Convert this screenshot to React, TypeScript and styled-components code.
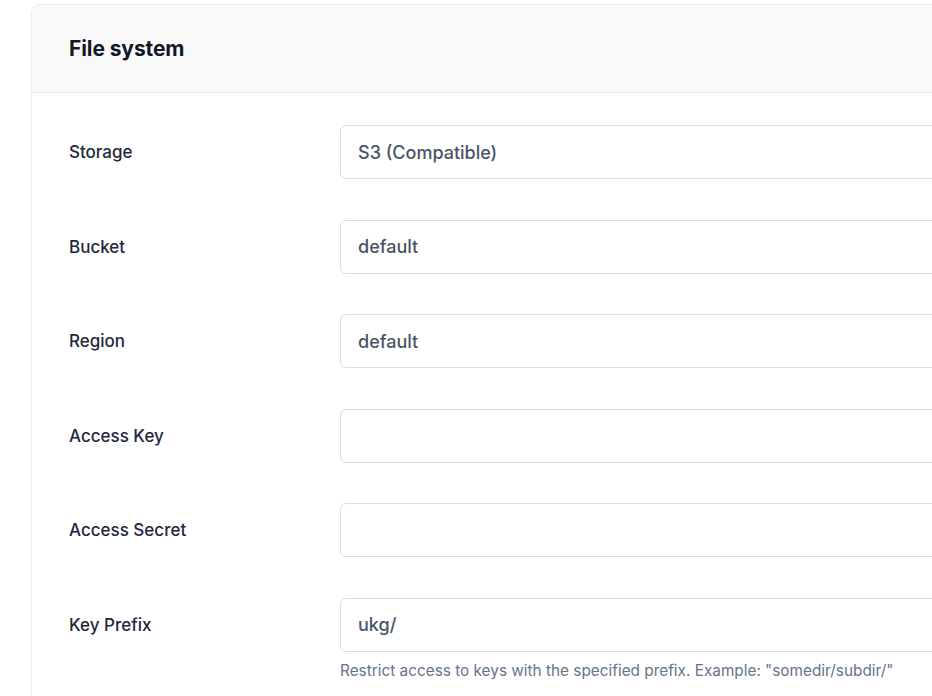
import styled, { createGlobalStyle } from 'styled-components'

const GlobalStyle = createGlobalStyle`
  html, body {
    margin: 0;
    padding: 0;
    background: #ffffff;
    overflow: hidden;
  }
  body {
    font-family: Inter, "Noto Sans", "Liberation Sans", sans-serif;
    -webkit-font-smoothing: antialiased;
  }
`

const Card = styled.section`
  width: 1200px;
  margin: 4px 0 0 31px;
  border: 1px solid #ebebed;
  border-radius: 9px;
  background: #ffffff;
  overflow: hidden;
`

const CardHeader = styled.header`
  height: 87px;
  display: flex;
  align-items: center;
  padding: 0 37px;
  background: #f9f9fa;
  border-bottom: 1px solid #ececee;
`

const Title = styled.h2`
  margin: 0;
  font-size: 21px;
  font-weight: 700;
  color: #111827;
  letter-spacing: -0.1px;
`

const CardBody = styled.div`
  padding: 32px 37px 40px;
  display: grid;
  grid-template-columns: 271px 1fr;
  row-gap: 40.6px;
`

const Label = styled.label`
  height: 54px;
  display: flex;
  align-items: center;
  font-size: 17px;
  font-weight: 500;
  color: #1e293b;
`

const Field = styled.div`
  display: flex;
  flex-direction: column;
`

const Input = styled.input`
  box-sizing: border-box;
  height: 54px;
  width: 100%;
  padding: 0 17px;
  border: 1px solid #d9dde7;
  border-radius: 6px;
  background: #ffffff;
  font-family: inherit;
  font-size: 18px;
  font-weight: 500;
  color: #475569;
  outline: none;
`

const Hint = styled.p`
  margin: 9px 0 0;
  font-size: 15.35px;
  color: #64748b;
`

const fields = [
  { label: 'Storage', value: 'S3 (Compatible)' },
  { label: 'Bucket', value: 'default' },
  { label: 'Region', value: 'default' },
  { label: 'Access Key', value: '' },
  { label: 'Access Secret', value: '' },
  {
    label: 'Key Prefix',
    value: 'ukg/',
    hint: 'Restrict access to keys with the specified prefix. Example: "somedir/subdir/"',
  },
]

export default function App() {
  return (
    <>
      <GlobalStyle />
      <Card>
        <CardHeader>
          <Title>File system</Title>
        </CardHeader>
        <CardBody>
          {fields.map((f) => (
            <>
              <Label key={f.label + '-l'}>{f.label}</Label>
              <Field key={f.label + '-f'}>
                <Input defaultValue={f.value} readOnly />
                {f.hint && <Hint>{f.hint}</Hint>}
              </Field>
            </>
          ))}
        </CardBody>
      </Card>
    </>
  )
}
